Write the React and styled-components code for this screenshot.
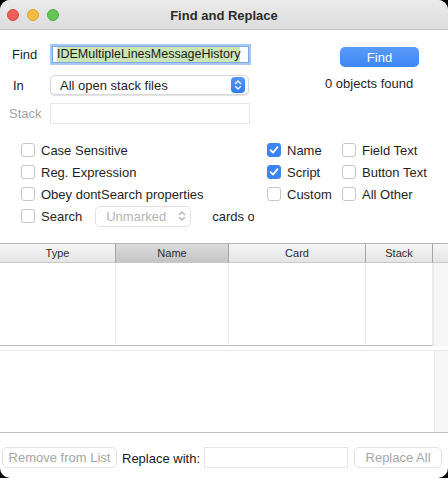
import React from 'react'
import styled, { createGlobalStyle } from 'styled-components'

const Global = createGlobalStyle`
  html, body {
    margin: 0;
    padding: 0;
    background: #000;
  }
  * { box-sizing: border-box; }
`;

const Window = styled.div`
  width: 448px;
  height: 478px;
  background: #fff;
  border-radius: 10px;
  overflow: hidden;
  display: flex;
  flex-direction: column;
  font-family: "Liberation Sans", Arial, sans-serif;
  font-size: 13px;
  color: #222;
`;

const TitleBar = styled.div`
  height: 30px;
  flex: none;
  display: flex;
  align-items: center;
  position: relative;
  background: linear-gradient(#ebebeb, #dcdcdc);
  border-bottom: 1px solid #c4c4c4;
`;

const Lights = styled.div`
  display: flex;
  gap: 8px;
  padding-left: 7px;
  padding-top: 1px;
`;

const Light = styled.span`
  width: 12px;
  height: 12px;
  border-radius: 50%;
  background: ${p => p.$color};
  border: 0.5px solid ${p => p.$edge};
`;

const Title = styled.div`
  position: absolute;
  left: 0;
  right: 0;
  text-align: center;
  font-weight: bold;
  color: #2b2b2b;
  top: 8px;
`;

const TopSection = styled.div`
  display: flex;
  padding-top: 13px;
  height: 95px;
  flex: none;
`;

const Form = styled.div`
  width: 252px;
  display: flex;
  flex-direction: column;
`;

const FieldRow = styled.div`
  display: flex;
  align-items: center;
  height: ${p => p.$h}px;
  margin-top: ${p => p.$top || 0}px;
`;

const Label = styled.span`
  width: ${p => 50 - (p.$indent || 0)}px;
  margin-left: ${p => p.$indent || 0}px;
  color: ${p => (p.$muted ? '#a3a3a3' : '#1f1f1f')};
  flex: none;
  white-space: nowrap;
`;

const FocusInput = styled.div`
  margin-left: 2px;
  width: 197px;
  height: 17px;
  border: 1px solid #7ea7e9;
  box-shadow: 0 0 0 2px #a9c7f3;
  display: flex;
  align-items: center;
  padding-left: 4px;
  background: #fff;
  overflow: hidden;
`;

const Selected = styled.span`
  background: #cbe5b6;
  line-height: 15px;
  font-size: 12.5px;
  color: #1a1a1a;
  white-space: nowrap;
`;

const Popup = styled.div`
  width: ${p => p.$w}px;
  height: ${p => p.$h}px;
  border-radius: 5px;
  background: #fff;
  border: 1px solid ${p => (p.$light ? '#e2e2e2' : '#d8d8d8')};
  box-shadow: ${p => (p.$light ? 'none' : '0 1px 1px rgba(0,0,0,0.12)')};
  display: flex;
  align-items: center;
  justify-content: space-between;
  padding: 0 3px 0 ${p => p.$pad}px;
  margin-left: ${p => p.$ml || 0}px;
  color: ${p => (p.$light ? '#b4b4b4' : '#1f1f1f')};
  flex: none;
`;

const Stepper = styled.span`
  width: 14px;
  height: 16px;
  border-radius: 4px;
  background: linear-gradient(#5498f8, #2f7bf4);
  display: flex;
  align-items: center;
  justify-content: center;
`;

const PlainInput = styled.div`
  width: ${p => p.$w}px;
  height: 21px;
  border: 1px solid #e6e6e6;
  background: #fff;
  flex: none;
`;

const Side = styled.div`
  display: flex;
  flex-direction: column;
  margin-left: 88px;
`;

const PrimaryButton = styled.div`
  margin-top: 4px;
  width: 79px;
  height: 20px;
  border-radius: 5px;
  background: linear-gradient(#5a9bf8, #3d86f6);
  color: #fff;
  display: flex;
  align-items: center;
  justify-content: center;
  font-size: 13px;
`;

const Status = styled.div`
  margin-top: 9px;
  margin-left: -15px;
  white-space: nowrap;
  color: #1f1f1f;
`;

const Options = styled.div`
  display: grid;
  grid-template-columns: 246px 75px auto;
  grid-auto-rows: 22px;
  padding-left: 21px;
  margin-top: 14px;
  flex: none;
`;

const Option = styled.label`
  display: flex;
  align-items: center;
  gap: 6px;
  white-space: nowrap;
  color: #1f1f1f;
`;

const Box = styled.span`
  width: 14px;
  height: 14px;
  border-radius: 3px;
  flex: none;
  display: flex;
  align-items: center;
  justify-content: center;
  background: ${p => (p.$checked ? '#3a85f5' : '#fff')};
  border: 1px solid ${p => (p.$checked ? '#3a85f5' : '#c6c6c6')};
`;

const SearchRow = styled.div`
  grid-column: 1 / span 3;
  display: flex;
  align-items: center;
`;

const Clip = styled.span`
  margin-left: 21px;
  width: 42px;
  overflow: hidden;
  white-space: nowrap;
  color: #1f1f1f;
`;

const Table = styled.div`
  margin-top: 16px;
  border-top: 1px solid #b4b4b4;
  flex: none;
  display: flex;
  flex-direction: column;
`;

const HeaderRow = styled.div`
  display: flex;
  height: 19px;
`;

const HeadCell = styled.div`
  width: ${p => p.$w}px;
  flex: none;
  font-size: 11px;
  color: #2c2c2c;
  display: flex;
  align-items: center;
  justify-content: center;
  background: ${p =>
    p.$active ? 'linear-gradient(#dcdcdc, #c4c4c4)' : 'linear-gradient(#f7f7f7, #e4e4e4)'};
  border-right: ${p => (p.$last ? 'none' : '1px solid #a7a7a7')};
  border-bottom: 1px solid #c9c9c9;
`;

const BodyRow = styled.div`
  display: flex;
  height: 83px;
`;

const BodyCell = styled.div`
  width: ${p => p.$w}px;
  flex: none;
  border-right: 1px solid #ebebeb;
  border-bottom: 1px solid #b9b9b9;
`;

const Gutter = styled.div`
  flex: 1;
  background: #f6f6f6;
  border-left: 1px solid #e9e9e9;
`;

const ListArea = styled.div`
  margin-top: 4px;
  height: 83px;
  display: flex;
  border-top: 1px solid #e8e8e8;
  border-bottom: 1px solid #bdbdbd;
  flex: none;
`;

const ListBody = styled.div`
  width: 434px;
  flex: none;
`;

const Footer = styled.div`
  display: flex;
  align-items: center;
  padding: 14px 0 0 2px;
`;

const GhostButton = styled.div`
  width: ${p => p.$w}px;
  height: 21px;
  border: 1px solid #e2e2e2;
  border-radius: 5px;
  color: #a6a6a6;
  display: flex;
  align-items: center;
  justify-content: center;
  margin-left: ${p => p.$ml || 0}px;
  flex: none;
  background: #fff;
`;

const FooterLabel = styled.span`
  margin: 2px 4px 0 5px;
  color: #1a1a1a;
  white-space: nowrap;
`;

const Check = () => (
  <svg width="10" height="10" viewBox="0 0 10 10">
    <path d="M1.6 5.2 L4 7.6 L8.5 2.2" fill="none" stroke="#fff" strokeWidth="1.8" strokeLinecap="round" strokeLinejoin="round" />
  </svg>
);

const UpDown = ({ color, w = 8 }) => (
  <svg width={w} height="12" viewBox="0 0 8 12">
    <path d="M1.5 4.5 L4 2 L6.5 4.5 M1.5 7.5 L4 10 L6.5 7.5" fill="none" stroke={color} strokeWidth="1.4" strokeLinecap="round" strokeLinejoin="round" />
  </svg>
);

const CheckOption = ({ label, checked }) => (
  <Option>
    <Box $checked={checked}>{checked && <Check />}</Box>
    {label}
  </Option>
);

const columns = [
  { name: 'Type', w: 116 },
  { name: 'Name', w: 113, active: true },
  { name: 'Card', w: 137 },
  { name: 'Stack', w: 67 },
];

export default function App() {
  return (
    <>
      <Global />
      <Window>
        <TitleBar>
          <Lights>
            <Light $color="#ec5f56" $edge="#d34c43" />
            <Light $color="#f4bd3f" $edge="#d9a234" />
            <Light $color="#62c554" $edge="#4fae42" />
          </Lights>
          <Title>Find and Replace</Title>
        </TitleBar>

        <TopSection>
          <Form>
            <FieldRow $h={23}>
              <Label $indent={12}>Find</Label>
              <FocusInput>
                <Selected>IDEMultipleLinesMessageHistory</Selected>
              </FocusInput>
            </FieldRow>
            <FieldRow $h={20} $top={9}>
              <Label $indent={13}>In</Label>
              <Popup $w={199} $h={20} $pad={9}>
                All open stack files
                <Stepper><UpDown color="#fff" /></Stepper>
              </Popup>
            </FieldRow>
            <FieldRow $h={21} $top={8}>
              <Label $indent={9} $muted>Stack</Label>
              <PlainInput $w={200} />
            </FieldRow>
          </Form>
          <Side>
            <PrimaryButton>Find</PrimaryButton>
            <Status>0 objects found</Status>
          </Side>
        </TopSection>

        <Options>
          <CheckOption label="Case Sensitive" />
          <CheckOption label="Name" checked />
          <CheckOption label="Field Text" />
          <CheckOption label="Reg. Expression" />
          <CheckOption label="Script" checked />
          <CheckOption label="Button Text" />
          <CheckOption label="Obey dontSearch properties" />
          <CheckOption label="Custom" />
          <CheckOption label="All Other" />
          <SearchRow>
            <CheckOption label="Search" />
            <Popup $w={96} $h={21} $pad={10} $ml={13} $light>
              Unmarked
              <UpDown color="#b5b5b5" w={10} />
            </Popup>
            <Clip>cards of</Clip>
          </SearchRow>
        </Options>

        <Table>
          <HeaderRow>
            {columns.map(c => (
              <HeadCell key={c.name} $w={c.w} $active={c.active}>{c.name}</HeadCell>
            ))}
            <HeadCell $w={15} $last />
          </HeaderRow>
          <BodyRow>
            {columns.map(c => (
              <BodyCell key={c.name} $w={c.w} />
            ))}
            <Gutter />
          </BodyRow>
        </Table>

        <ListArea>
          <ListBody />
          <Gutter />
        </ListArea>

        <Footer>
          <GhostButton $w={115}>Remove from List</GhostButton>
          <FooterLabel>Replace with:</FooterLabel>
          <PlainInput $w={144} />
          <GhostButton $w={88} $ml={6}>Replace All</GhostButton>
        </Footer>
      </Window>
    </>
  );
}
